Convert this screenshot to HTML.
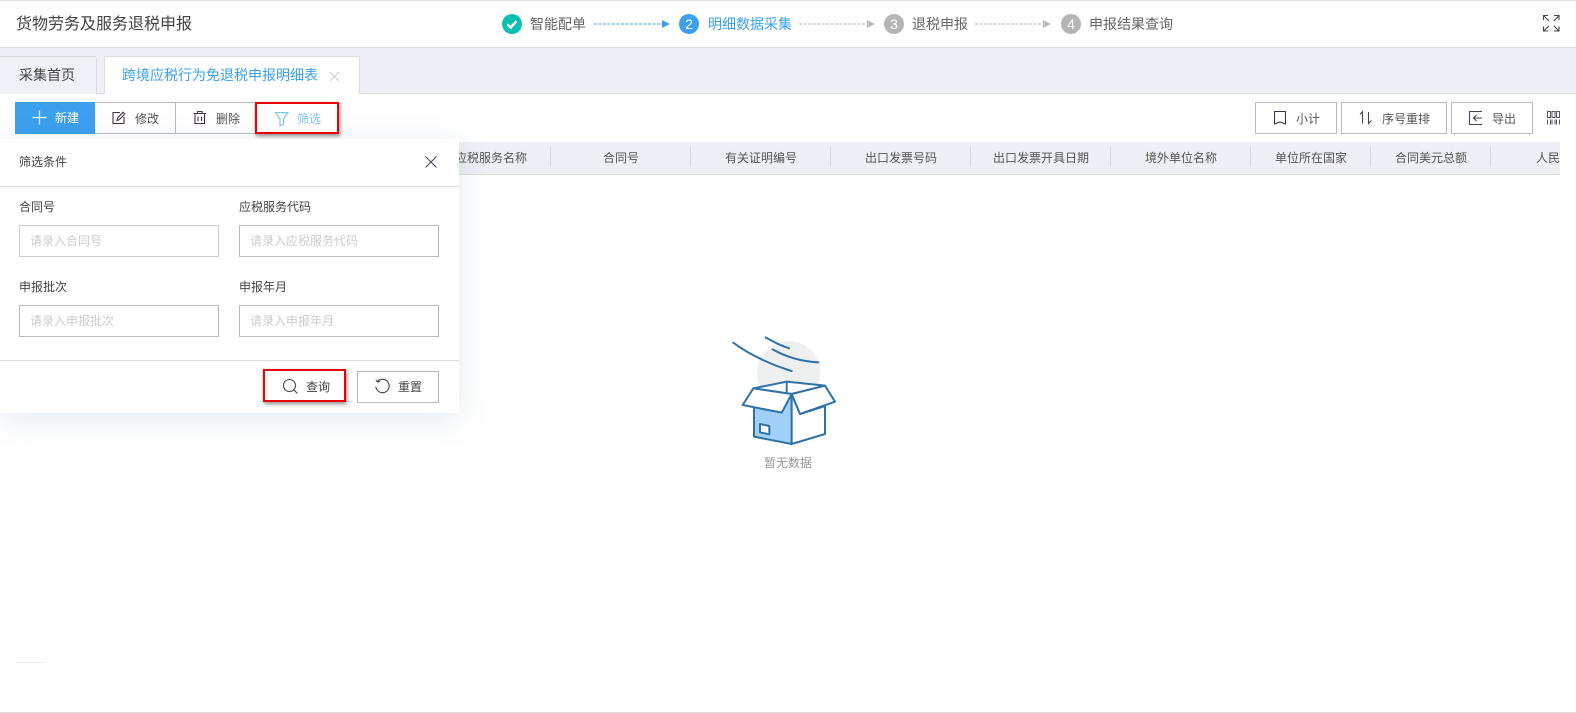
<!DOCTYPE html>
<html lang="zh-CN">
<head>
<meta charset="utf-8">
<title>货物劳务及服务退税申报</title>
<style>
html,body{margin:0;padding:0;background:#fff}
body{position:relative;width:1576px;height:713px;overflow:hidden;font-family:"Liberation Sans","Noto Sans CJK SC",sans-serif;font-size:12px;color:#444}
.a{position:absolute;box-sizing:border-box}
.t{position:absolute;white-space:nowrap;line-height:18px;height:18px}
.btn{position:absolute;box-sizing:border-box;border:1px solid #bbb;background:#fff}
.sep{position:absolute;top:147px;width:1px;height:20px;background:#d8d9dd}
.h{color:#555;top:149px}
.lab{color:#444}
.inp{position:absolute;box-sizing:border-box;width:200px;height:32px;border:1px solid #bbb;background:#fff}
.ph{color:#ccc}
.circ{position:absolute;top:14px;width:20px;height:20px;border-radius:50%;background:#b5b5b5;color:#fff;font-size:14px;line-height:20px;text-align:center}
svg{position:absolute;overflow:visible}
</style>
</head>
<body>
<!-- top bar -->
<div class="a" style="left:0;top:0;width:1576px;height:1px;background:#e2e2e2"></div>
<div class="t" style="left:16px;top:16px;font-size:16px;color:#444">货物劳务及服务退税申报</div>

<div class="circ" style="left:502px;background:#0dbfae"></div>
<svg style="left:502px;top:14px" width="20" height="20" fill="none"><path d="M5.5 10.3l3.2 3.2 5.8-6.3" stroke="#fff" stroke-width="2.4"/></svg>
<div class="t" style="left:530px;top:15px;font-size:14px;color:#666">智能配单</div>
<svg style="left:594px;top:19px" width="80" height="10"><line x1="0" y1="5" x2="68" y2="5" stroke="#3ba0ee" stroke-dasharray="3 1.5"/><path d="M68 1l8 4-8 4z" fill="#3ba0ee"/></svg>
<div class="circ" style="left:679px;background:#3ba0ee">2</div>
<div class="t" style="left:708px;top:15px;font-size:14px;color:#3ba0ee">明细数据采集</div>
<svg style="left:799px;top:19px" width="80" height="10"><line x1="0" y1="5" x2="68" y2="5" stroke="#b5b5b5" stroke-dasharray="3 1.5"/><path d="M68 1l8 4-8 4z" fill="#bbb"/></svg>
<div class="circ" style="left:884px">3</div>
<div class="t" style="left:912px;top:15px;font-size:14px;color:#666">退税申报</div>
<svg style="left:975px;top:19px" width="80" height="10"><line x1="0" y1="5" x2="68" y2="5" stroke="#b5b5b5" stroke-dasharray="3 1.5"/><path d="M68 1l8 4-8 4z" fill="#bbb"/></svg>
<div class="circ" style="left:1061px">4</div>
<div class="t" style="left:1089px;top:15px;font-size:14px;color:#666">申报结果查询</div>

<svg style="left:1543px;top:15px" width="17" height="17" fill="none" stroke="#445" stroke-width="1.1"><path d="M0.5 5V0.5H5M0.5 0.5L6 6M11 0.5h5V5M16 0.5L11 6M0.5 11.5V16H5M0.5 16L6 11M16 11.5V16H11M16 16L11 11"/></svg>

<!-- tab bar -->
<div class="a" style="left:0;top:47px;width:1576px;height:47px;background:#eff0f5;border-top:1px solid #dcdcdf;border-bottom:1px solid #dcdcdf"></div>
<div class="a" style="left:-2px;top:56px;width:99px;height:38px;background:#f0f1f6;border:1px solid #dcdcdf;border-bottom:0;border-radius:0 3px 0 0"></div>
<div class="t" style="left:19px;top:66px;font-size:14px;color:#444">采集首页</div>
<div class="a" style="left:104px;top:56px;width:256px;height:38px;background:#fff;border:1px solid #dcdcdf;border-bottom:0;border-radius:3px 3px 0 0"></div>
<div class="t" style="left:122px;top:66px;font-size:14px;color:#3ba0ee">跨境应税行为免退税申报明细表</div>
<svg style="left:329px;top:71px" width="11" height="11" stroke="#ccc" stroke-width="1.1"><path d="M1 1l9 9M10 1l-9 9"/></svg>

<!-- toolbar left -->
<div class="a" style="left:15px;top:102px;width:81px;height:32px;background:#3ba0ee"></div>
<svg style="left:32px;top:110px" width="15" height="15" stroke="#fff" stroke-width="1.2"><path d="M7.5 0.5v14M0.5 7.5h14"/></svg>
<div class="t" style="left:55px;top:109px;color:#fff">新建</div>
<div class="btn" style="left:95px;top:102px;width:81px;height:32px;border-left:0"></div>
<svg style="left:112px;top:111px" width="14" height="14" fill="none" stroke="#434" stroke-width="1.1"><path d="M8 1.5H1v11h11V6"/><path d="M5 9.5l.6-2.5L11 1.2l1.8 1.7L7.4 8.7z"/></svg>
<div class="t" style="left:135px;top:110px;color:#555">修改</div>
<div class="btn" style="left:175px;top:102px;width:81px;height:32px;border-left:1px solid #bbb"></div>
<svg style="left:193px;top:111px" width="14" height="14" fill="none" stroke="#434" stroke-width="1.1"><path d="M0.5 2.5h12.5M4.5 2.5V0.5h4.5v2M2 2.5V12.5h9.5V2.5M5 5.5v4.5M8.5 5.5v4.5"/></svg>
<div class="t" style="left:216px;top:110px;color:#555">删除</div>
<div class="a" style="left:255px;top:102px;width:84px;height:32px;background:#fff;border:2px solid #e8000b;box-shadow:1px 2px 4px rgba(0,0,0,.45);z-index:3"></div>
<svg style="left:275px;top:112px;z-index:4" width="14" height="14" fill="none" stroke="#7cc0f4" stroke-width="1.1"><path d="M0.5 0.5h12.5L8.5 7v5.5L5 13.5V7z"/></svg>
<div class="t" style="left:297px;top:110px;color:#7cc0f4;z-index:4">筛选</div>

<!-- toolbar right -->
<div class="btn" style="left:1255px;top:102px;width:82px;height:32px"></div>
<svg style="left:1274px;top:111px" width="13" height="14" fill="none" stroke="#435" stroke-width="1.1"><path d="M0.5 0.5h11v12.5l-5.5-2-5.5 2z"/></svg>
<div class="t" style="left:1296px;top:110px;color:#555">小计</div>
<div class="btn" style="left:1341px;top:102px;width:106px;height:32px"></div>
<svg style="left:1359px;top:111px" width="14" height="14" fill="none" stroke="#445" stroke-width="1.1"><path d="M1 3.5L3.5 0.8V12.5M9.5 1v11.5l3-3"/></svg>
<div class="t" style="left:1382px;top:110px;color:#555">序号重排</div>
<div class="btn" style="left:1451px;top:102px;width:82px;height:32px"></div>
<svg style="left:1469px;top:111px" width="14" height="14" fill="none" stroke="#445" stroke-width="1.1"><path d="M13 0.5H0.5v13H13M13 7H4.5M7.5 4L4.5 7l3 3"/></svg>
<div class="t" style="left:1492px;top:110px;color:#555">导出</div>
<svg style="left:1547px;top:111px" width="13" height="14" fill="none" stroke="#556" stroke-width="1"><path d="M0.5 0.5h3v6h-3zM5 0.5h3v6h-3zM9.500 0.500h3v6h-3zM0.500 8.500v5M3.500 8.500v5M5 8.500v5M8 8.500v5M9.500 8.500v5M12.500 8.500v5"/></svg>

<!-- table header -->
<div class="a" style="left:15px;top:142px;width:1545px;height:33px;background:#eff0f5;border-bottom:1px solid #dcdce0"></div>
<div class="sep" style="left:550px"></div><div class="sep" style="left:690px"></div><div class="sep" style="left:830px"></div><div class="sep" style="left:970px"></div><div class="sep" style="left:1110px"></div><div class="sep" style="left:1250px"></div><div class="sep" style="left:1370px"></div><div class="sep" style="left:1490px"></div>
<div class="t h" style="left:455px">应税服务名称</div>
<div class="t h" style="left:603px">合同号</div>
<div class="t h" style="left:725px">有关证明编号</div>
<div class="t h" style="left:865px">出口发票号码</div>
<div class="t h" style="left:993px">出口发票开具日期</div>
<div class="t h" style="left:1145px">境外单位名称</div>
<div class="t h" style="left:1275px">单位所在国家</div>
<div class="t h" style="left:1395px">合同美元总额</div>
<div class="a" style="left:1536px;top:149px;width:24px;height:18px;overflow:hidden;line-height:18px;white-space:nowrap;color:#555">人民币</div>

<!-- empty state -->
<svg style="left:700px;top:320px" width="160" height="160" viewBox="0 0 480 480" fill="none" stroke="#2f72a8" stroke-width="6" stroke-linejoin="round" stroke-linecap="round">
<circle cx="266" cy="158" r="95" fill="#eef0f0" stroke="none"/>
<path d="M100 68C150 105 215 135 275 153M197 52C220 66 245 77 267 85M218 88C260 112 305 124 355 127"/>
<path d="M160 205L260 185L375 197L275 222z" fill="#fff"/>
<path d="M260 185V215"/>
<path d="M162 262V350L275 372V222z" fill="#a0d0f8"/>
<path d="M275 372L375 342V258L300 282L275 222z" fill="#fff"/>
<path d="M160 205L128 255L245 278L275 222z" fill="#fff"/>
<path d="M275 222L300 282L405 245L375 197z" fill="#fff"/>
<path d="M180 312L208 318V343L180 337z" fill="#fff"/>
</svg>
<div class="t" style="left:764px;top:454px;color:#999">暂无数据</div>

<div class="a" style="left:15px;top:662px;width:30px;height:1px;background:#eee"></div>
<div class="a" style="left:0;top:712px;width:1576px;height:1px;background:#ddd"></div>

<!-- filter popup -->
<div class="a" style="left:0;top:139px;width:459px;height:274px;background:#fff;box-shadow:0 6px 30px rgba(60,90,130,.14);z-index:2">
  <div class="t" style="left:19px;top:14px;color:#444">筛选条件</div>
  <svg style="left:425px;top:17px" width="12" height="12" stroke="#445" stroke-width="1"><path d="M0.500 0.500l11 11M11.500 0.500l-11 11"/></svg>
  <div class="a" style="left:0;top:47px;width:459px;height:1px;background:#dcdcdc"></div>
  <div class="t lab" style="left:19px;top:59px">合同号</div>
  <div class="t lab" style="left:239px;top:59px">应税服务代码</div>
  <div class="inp" style="left:19px;top:86px;border-color:#ccc"></div>
  <div class="t ph" style="left:30px;top:93px">请录入合同号</div>
  <div class="inp" style="left:239px;top:86px"></div>
  <div class="t ph" style="left:250px;top:93px">请录入应税服务代码</div>
  <div class="t lab" style="left:19px;top:139px">申报批次</div>
  <div class="t lab" style="left:239px;top:139px">申报年月</div>
  <div class="inp" style="left:19px;top:166px"></div>
  <div class="t ph" style="left:30px;top:173px">请录入申报批次</div>
  <div class="inp" style="left:239px;top:166px"></div>
  <div class="t ph" style="left:250px;top:173px">请录入申报年月</div>
  <div class="a" style="left:0;top:221px;width:459px;height:1px;background:#dcdcdc"></div>
  <div class="a" style="left:263px;top:230px;width:83px;height:33px;background:#fff;border:2px solid #e8000b;box-shadow:1px 2px 4px rgba(0,0,0,.45)"></div>
  <svg style="left:283px;top:240px" width="15" height="15" fill="none" stroke="#445" stroke-width="1.1"><circle cx="6.500" cy="6.500" r="6"/><path d="M10.800 10.800l3.500 3.500"/></svg>
  <div class="t" style="left:306px;top:239px;color:#444">查询</div>
  <div class="btn" style="left:357px;top:232px;width:82px;height:32px"></div>
  <svg style="left:375px;top:240px" width="15" height="15" fill="none" stroke="#445" stroke-width="1.1"><path d="M2.500 2.500A6.700 6.700 0 1 1 0.800 7.500M0.800 0.800l1.700 2.200 2.600-.5"/></svg>
  <div class="t" style="left:398px;top:239px;color:#444">重置</div>
</div>
</body>
</html>
